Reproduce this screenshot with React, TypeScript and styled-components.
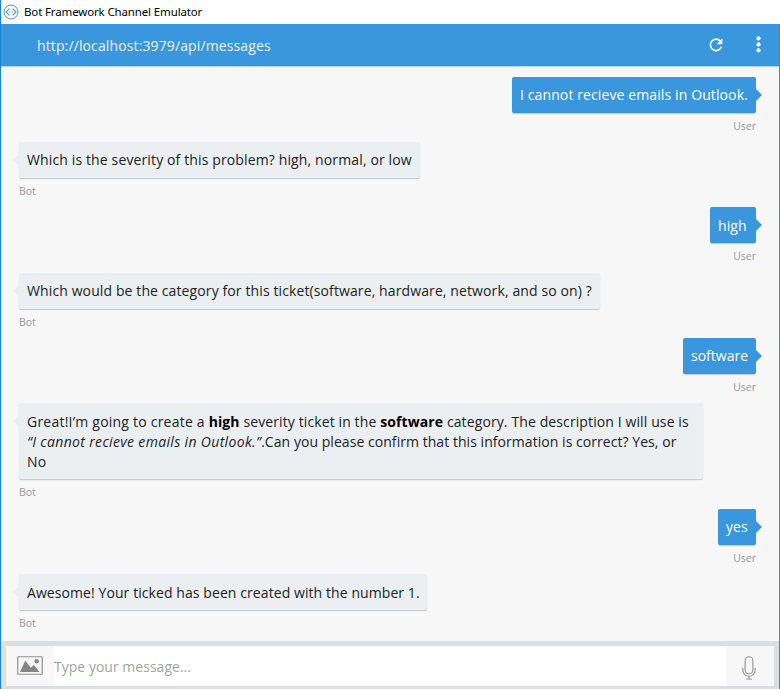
import React from "react";
import styled, { createGlobalStyle, css } from "styled-components";

const Global = createGlobalStyle`
  * { box-sizing: border-box; }
  body { margin: 0; background: #fff; overflow: hidden; }
`;

const Window = styled.div`
  display: flex;
  flex-direction: column;
  width: 780px;
  height: 689px;
  font-family: "Open Sans", "Noto Sans", sans-serif;
  background: #fff;
`;

const TitleBar = styled.div`
  display: flex;
  align-items: center;
  height: 24px;
  padding-left: 2px;
  gap: 5px;
  border-left: 1px solid #1883d7;
`;

const Title = styled.span`
  font-family: "Noto Sans", sans-serif;
  font-size: 11.5px;
  line-height: 24px;
  letter-spacing: -0.14px;
  color: #000;
`;

const Frame = styled.div`
  display: flex;
  flex-direction: column;
  flex: 1;
  min-height: 0;
  border-left: 1px solid #1883d7;
  border-right: 1px solid #777a7d;
  background: #f7f7f7;
`;

const Header = styled.header`
  display: flex;
  align-items: center;
  height: 43px;
  padding: 0 14px 0 36px;
  background: #3a96dd;
  border-bottom: 1px solid #b5d7f1;
`;

const Address = styled.span`
  flex: 1;
  font-size: 14px;
  line-height: 20px;
  letter-spacing: 0.12px;
  color: #e9f4fc;
  padding-top: 1px;
`;

const HeaderIcons = styled.div`
  display: flex;
  align-items: center;
  gap: 28px;
  svg { display: block; }
`;

const Chat = styled.main`
  flex: 1;
  min-height: 0;
  padding: 9.6px 23px 0 18px;
`;

const Message = styled.div<{ $user?: boolean }>`
  display: flex;
  flex-direction: column;
  align-items: ${(p) => (p.$user ? "flex-end" : "flex-start")};
`;

const Bubble = styled.div<{ $user?: boolean; $width: number }>`
  position: relative;
  width: ${(p) => p.$width}px;
  padding: 8.4px 8px 7.6px;
  border-radius: 2px;
  background: ${(p) => (p.$user ? "#3a96dd" : "#ebeff2")};
  color: ${(p) => (p.$user ? "#fff" : "#202326")};
  box-shadow: 0 1px 1px rgba(0, 0, 0, 0.2);
  &::after {
    content: "";
    position: absolute;
    top: 12px;
    border: 6px solid transparent;
    ${(p) =>
      p.$user
        ? css`right: -12px; border-left-color: #3a96dd;`
        : css`left: -12px; border-right-color: #ebeff2;`}
  }
`;

const Line = styled.div<{ $spacing: number }>`
  font-size: 14px;
  line-height: 20px;
  white-space: pre;
  letter-spacing: ${(p) => p.$spacing}px;
  b { color: #000; font-weight: 700; letter-spacing: 0.1px; }
  i { letter-spacing: 0.34px; }
`;

const Opening = styled.span`
  letter-spacing: 0.22px;
`;

const Sender = styled.div`
  height: 29.4px;
  padding-top: 5px;
  font-size: 10.5px;
  line-height: 16px;
  color: #999;
`;

const Composer = styled.footer`
  display: flex;
  height: 48px;
  padding: 5px 5px 3px 5px;
  background: #dbdfe2;
`;

const ComposerButton = styled.button`
  display: flex;
  align-items: center;
  justify-content: center;
  width: 48px;
  padding: 0 0 1px;
  border: 0;
  background: #f7f7f7;
`;

const MicButton = styled(ComposerButton)`
  padding: 3px 2px 0 0;
`;

const Input = styled.input`
  flex: 1;
  min-width: 0;
  padding: 1px 0 0;
  border: 0;
  outline: 0;
  background: #fff;
  font: 14px "Open Sans", sans-serif;
  letter-spacing: 0.02px;
  &::placeholder { color: #a3a3a3; opacity: 1; }
`;

type Entry = { user?: boolean; width: number; lines: { text: React.ReactNode; spacing: number }[] };

const entries: Entry[] = [
  { user: true, width: 244, lines: [{ text: "I cannot recieve emails in Outlook.", spacing: 0.11 }] },
  { width: 401, lines: [{ text: "Which is the severity of this problem? high, normal, or low", spacing: 0.13 }] },
  { user: true, width: 46, lines: [{ text: "high", spacing: 0.1 }] },
  { width: 581, lines: [{ text: "Which would be the category for this ticket(software, hardware, network, and so on) ?", spacing: 0.11 }] },
  { user: true, width: 73, lines: [{ text: "software", spacing: 0 }] },
  {
    width: 684,
    lines: [
      { text: <><Opening>Great!I’m going to create a </Opening><b>high</b> severity ticket in the <b>software</b> category. The description I will use is</>, spacing: 0.11 },
      { text: <><i>“I cannot recieve emails in Outlook.”</i>.Can you please confirm that this information is correct? Yes, or</>, spacing: 0.05 },
      { text: "No", spacing: 0.1 },
    ],
  },
  { user: true, width: 38, lines: [{ text: "yes", spacing: 0 }] },
  { width: 408, lines: [{ text: "Awesome! Your ticked has been created with the number 1.", spacing: 0.08 }] },
];

const BotLogo = () => (
  <svg width="16" height="16" viewBox="0 0 16 16" fill="none" stroke="#4a94c8">
    <circle cx="8" cy="8" r="7" strokeWidth="1" />
    <path d="M6.4 4.6 3 8l3.4 3.4M9.6 4.6 13 8l-3.4 3.4" strokeWidth="1.1" />
    <path d="M6 8h1M7.6 8h1M9.2 8h1" strokeWidth="1" />
  </svg>
);

const Refresh = () => (
  <svg width="14" height="14" viewBox="0 0 14 14">
    <path d="M11.4 3.1A5.7 5.7 0 1 0 12.5 8.7" fill="none" stroke="#fff" strokeWidth="1.6" />
    <path d="M13.4.4v5.8H7.6z" fill="#fff" />
  </svg>
);

const Dots = () => (
  <svg width="14" height="18" viewBox="0 0 14 18" fill="#fff">
    <circle cx="7.5" cy="2.4" r="2.1" />
    <circle cx="7.5" cy="8.4" r="2.1" />
    <circle cx="7.5" cy="14.4" r="2.1" />
  </svg>
);

const Picture = () => (
  <svg width="26" height="19" viewBox="0 0 26 19">
    <rect x=".75" y=".75" width="24.5" height="17.5" rx=".5" fill="#f7f7f7" stroke="#919191" strokeWidth="1.2" />
    <path d="M3 16 8.3 4.6l5.4 7.2 3.2-2.7L22.5 16z" fill="#858585" />
    <circle cx="19.7" cy="5.2" r="2.2" fill="#858585" />
  </svg>
);

const Mic = () => (
  <svg width="14" height="24" viewBox="0 0 14 24" fill="none" stroke="#929292">
    <rect x="3.1" y=".8" width="7.8" height="17" rx="3.9" strokeWidth="1.1" />
    <path d="M.9 12v2.5a6.1 5.7 0 0 0 12.2 0V12M7 20v3M4 23h6" strokeWidth="1.1" />
  </svg>
);

export default function App() {
  return (
    <Window>
      <Global />
      <TitleBar>
        <BotLogo />
        <Title>Bot Framework Channel Emulator</Title>
      </TitleBar>
      <Frame>
        <Header>
          <Address>http://localhost:3979/api/messages</Address>
          <HeaderIcons>
            <Refresh />
            <Dots />
          </HeaderIcons>
        </Header>
        <Chat>
          {entries.map((e, i) => (
            <Message key={i} $user={e.user}>
              <Bubble $user={e.user} $width={e.width}>
                {e.lines.map((l, j) => (
                  <Line key={j} $spacing={l.spacing}>{l.text}</Line>
                ))}
              </Bubble>
              <Sender>{e.user ? "User" : "Bot"}</Sender>
            </Message>
          ))}
        </Chat>
        <Composer>
          <ComposerButton aria-label="Attach a picture"><Picture /></ComposerButton>
          <Input placeholder="Type your message..." />
          <MicButton aria-label="Speak"><Mic /></MicButton>
        </Composer>
      </Frame>
    </Window>
  );
}
